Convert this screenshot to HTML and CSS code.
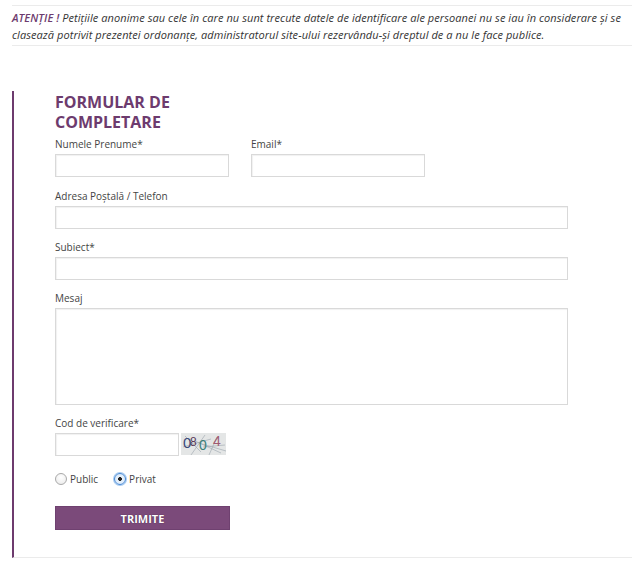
FILE: index.html
```html
<!DOCTYPE html>
<html lang="ro">
<head>
<meta charset="utf-8">
<title>Formular de completare</title>
<link rel="stylesheet" href="styles.css">
</head>
<body>
<div class="page">
  <p class="notice"><span class="notice-title">ATENȚIE !</span> Petițiile anonime sau cele în care nu sunt trecute datele de identificare ale persoanei nu se iau în considerare și se clasează potrivit prezentei ordonanțe, administratorul site-ului rezervându-și dreptul de a nu le face publice.</p>

  <form class="form-box">
    <h2 class="form-title">FORMULAR DE COMPLETARE</h2>

    <div class="row-two">
      <div class="field">
        <label class="label">Numele Prenume*</label>
        <input class="input input-half" type="text">
      </div>
      <div class="field">
        <label class="label">Email*</label>
        <input class="input input-half" type="text">
      </div>
    </div>

    <div class="field">
      <label class="label">Adresa Poștală / Telefon</label>
      <input class="input input-full" type="text">
    </div>

    <div class="field">
      <label class="label">Subiect*</label>
      <input class="input input-full" type="text">
    </div>

    <div class="field">
      <label class="label">Mesaj</label>
      <textarea class="input textarea"></textarea>
    </div>

    <div class="field">
      <label class="label">Cod de verificare*</label>
      <div class="captcha-row">
        <input class="input input-code" type="text">
        <svg class="captcha" width="45" height="22" viewBox="0 0 45 22">
          <rect width="45" height="22" fill="#e4e6e6"/>
          <path d="M4 3 L20 19 M2 14 L30 6 M10 22 L24 2 M18 10 L45 18 M22 14 L44 12 M28 22 L36 4 M14 8 L40 20" stroke="#9aa4ac" stroke-width="0.6" fill="none"/>
          <text x="2" y="15" font-family="Liberation Sans, sans-serif" font-size="15" fill="#3a4a7a">0</text>
          <text x="9" y="13" font-family="Liberation Sans, sans-serif" font-size="12" fill="#5a3a5a">8</text>
          <text x="18" y="17" font-family="Liberation Sans, sans-serif" font-size="14" fill="#3a8078">0</text>
          <text x="32" y="13" font-family="Liberation Sans, sans-serif" font-size="14" fill="#a05a70">4</text>
        </svg>
      </div>
    </div>

    <div class="radios">
      <span class="radio-item"><span class="radio"></span>Public</span>
      <span class="radio-item"><span class="radio radio-on"></span>Privat</span>
    </div>

    <button class="submit" type="button">TRIMITE</button>
  </form>
</div>
</body>
</html>
```

FILE: styles.css
```css
* { box-sizing: border-box; }

body {
  margin: 0;
  background: #fff;
  font-family: "Open Sans", "DejaVu Sans", sans-serif;
  color: #444;
}

.page {
  width: 620px;
  margin-left: 12px;
  padding-top: 5px;
}

.notice {
  margin: 0;
  border-top: 1px solid #ebebeb;
  border-bottom: 1px solid #ebebeb;
  padding: 3px 0 2px 0;
  font-size: 11px;
  line-height: 17px;
  font-style: italic;
  letter-spacing: 0.07px;
  color: #333;
}

.notice-title {
  color: #6d3b6e;
  font-weight: 600;
}

.form-box {
  margin-top: 45px;
  border-left: 2px solid #6d3b6e;
  border-bottom: 1px solid #ebebeb;
  padding: 1px 0 27px 41px;
}

.form-title {
  width: 174px;
  margin: 0 0 5px 0;
  font-size: 16px;
  line-height: 20px;
  font-weight: 700;
  color: #6d3b6e;
}

.row-two {
  display: flex;
  gap: 22px;
  margin-bottom: 1px;
}

.field {
  display: flex;
  flex-direction: column;
  margin-bottom: 11px;
}

.label {
  font-size: 10px;
  line-height: 14px;
  margin-bottom: 3px;
  color: #444;
}

.input {
  display: block;
  height: 23px;
  border: 1px solid #d9d9d9;
  box-shadow: inset 1px 1px 1px rgba(0,0,0,0.06);
  background: #fff;
  margin: 0;
  padding: 0 4px;
  font-family: inherit;
  font-size: 11px;
}

.input-half { width: 174px; }
.input-full { width: 513px; }

.textarea {
  width: 513px;
  height: 97px;
  resize: none;
}

.captcha-row {
  display: flex;
  align-items: flex-start;
  gap: 2px;
}

.input-code { width: 124px; }

.captcha {
  display: block;
}

.radios {
  display: flex;
  gap: 16px;
  margin-top: 17px;
  height: 12px;
  align-items: center;
  font-size: 10px;
  color: #444;
}

.radio-item {
  display: flex;
  align-items: center;
  gap: 3px;
}

.radio {
  display: inline-block;
  width: 12px;
  height: 12px;
  border-radius: 50%;
  border: 1px solid #a9a9a9;
  background: radial-gradient(circle at 50% 35%, #fff 0%, #e8e8e8 100%);
}

.radio-on {
  border-color: #4a8ad6;
  background: radial-gradient(circle, #222 0, #222 1.6px, #eaf3fc 2.2px, #cde2f7 100%);
  box-shadow: 0 0 0 1px #a7cbf0;
}

.submit {
  display: block;
  margin-top: 21px;
  width: 175px;
  height: 24px;
  border: 1px solid #6f4170;
  background: #7b4a7a;
  color: #fff;
  font-family: inherit;
  font-weight: 700;
  font-size: 11px;
  text-shadow: 0 0 1px #3b1c3b;
  padding: 0;
}
```
